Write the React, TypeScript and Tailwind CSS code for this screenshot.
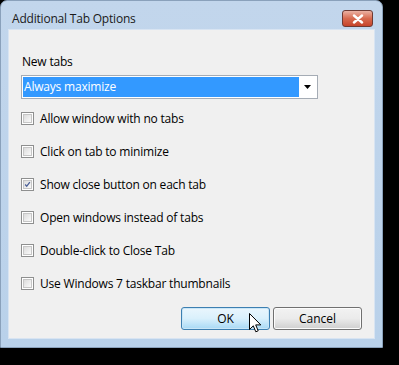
import React from "react";

const OPTIONS = [
  { label: "Allow window with no tabs", checked: false },
  { label: "Click on tab to minimize", checked: false },
  { label: "Show close button on each tab", checked: true },
  { label: "Open windows instead of tabs", checked: false },
  { label: "Double-click to Close Tab", checked: false },
  { label: "Use Windows 7 taskbar thumbnails", checked: false },
];

function CheckBox({ checked }: { checked: boolean }) {
  return (
    <div className="w-[13px] h-[13px] border border-[#8e8f8f] bg-white p-[1px] shrink-0">
      <div className="w-full h-full border border-[#c6c6c6] bg-gradient-to-br from-[#dcdcdc] to-[#fafafa] flex items-center justify-center">
        {checked && (
          <svg width="9" height="9" viewBox="0 0 9 9">
            <path d="M1.5 4.5 L3.5 6.8 L7.5 1.5" fill="none" stroke="#4a5f97" strokeWidth="1.7" />
          </svg>
        )}
      </div>
    </div>
  );
}

export default function App() {
  return (
    <div
      className="w-[399px] h-[365px] bg-black relative overflow-hidden text-black"
      style={{ fontFamily: '"Open Sans", "Noto Sans", sans-serif' }}
    >
      {/* window frame */}
      <div className="w-[383px] h-[348px] rounded-t-[7px] border border-[#8aa1bb] bg-gradient-to-b from-[#c2d6ec] to-[#b9d1ea] flex flex-col">
        {/* title bar */}
        <div className="h-[28px] flex items-start justify-between shrink-0">
          <span className="pl-[11px] pt-[10px] text-[12px] leading-[16px] tracking-[-0.2px] text-[#1a1a1a]">
            Additional Tab Options
          </span>
          <div className="mt-[9px] mr-[9px] w-[31px] h-[17px] rounded-[3px] border border-[#6e3a33] bg-gradient-to-b from-[#eab1a3] via-[#d76a4f] to-[#c6432a] flex items-center justify-center">
            <svg width="12" height="10" viewBox="0 0 12 10">
              <path d="M2 1.5 L10 8.5 M10 1.5 L2 8.5" stroke="#ffffff" strokeWidth="2.4" strokeLinecap="round" />
            </svg>
          </div>
        </div>

        {/* client area */}
        <div className="mx-[7px] mb-[8px] flex-1 border border-[#d8e4f2] bg-[#f0f0f0] px-[12px] flex flex-col text-[12px]">
          <div className="mt-[24px] leading-[16px] pl-[1px] tracking-[-0.2px]">New tabs</div>

          <div className="mt-[5px] h-[24px] w-[297px] border border-[#a5acb5] bg-white p-[1px] flex">
            <div className="flex-1 bg-[#3399ff] text-white leading-[20px] pl-[1px] tracking-[-0.2px]">
              Always maximize
            </div>
            <div className="w-[17px] flex items-center justify-center">
              <svg width="7" height="4" viewBox="0 0 7 4">
                <path d="M0 0 L7 0 L3.5 4 Z" fill="#000" />
              </svg>
            </div>
          </div>

          <div className="mt-[3px] flex flex-col">
            {OPTIONS.map((o) => (
              <div key={o.label} className="h-[33px] flex items-center gap-[6px]">
                <CheckBox checked={o.checked} />
                <span className="leading-[16px] tracking-[-0.2px]">{o.label}</span>
              </div>
            ))}
          </div>

          <div className="mt-[7px] flex justify-end gap-[3px]">
            <button className="w-[89px] h-[23px] rounded-[3px] border border-[#3c7fb1] bg-gradient-to-b from-[#eaf6fd] via-[#d9f0fc] to-[#a7d9f5] shadow-[inset_0_0_0_1px_#c9e6f7] text-[12px] leading-[16px]">
              OK
            </button>
            <button className="w-[89px] h-[23px] rounded-[3px] border border-[#707070] bg-gradient-to-b from-[#f2f2f2] via-[#ebebeb] to-[#cfcfcf] shadow-[inset_0_0_0_1px_#fcfcfc] text-[12px] leading-[16px]">
              Cancel
            </button>
          </div>
        </div>
      </div>

      {/* mouse pointer */}
      <svg className="absolute left-[249px] top-[313px]" width="13" height="21" viewBox="0 0 13 21">
        <path
          d="M0.5 0.5 L0.5 16.5 L4.3 12.8 L6.8 18.8 L9.2 17.8 L6.7 11.9 L11.8 11.9 Z"
          fill="#fff"
          stroke="#000"
          strokeWidth="1"
          strokeLinejoin="round"
        />
      </svg>
    </div>
  );
}
